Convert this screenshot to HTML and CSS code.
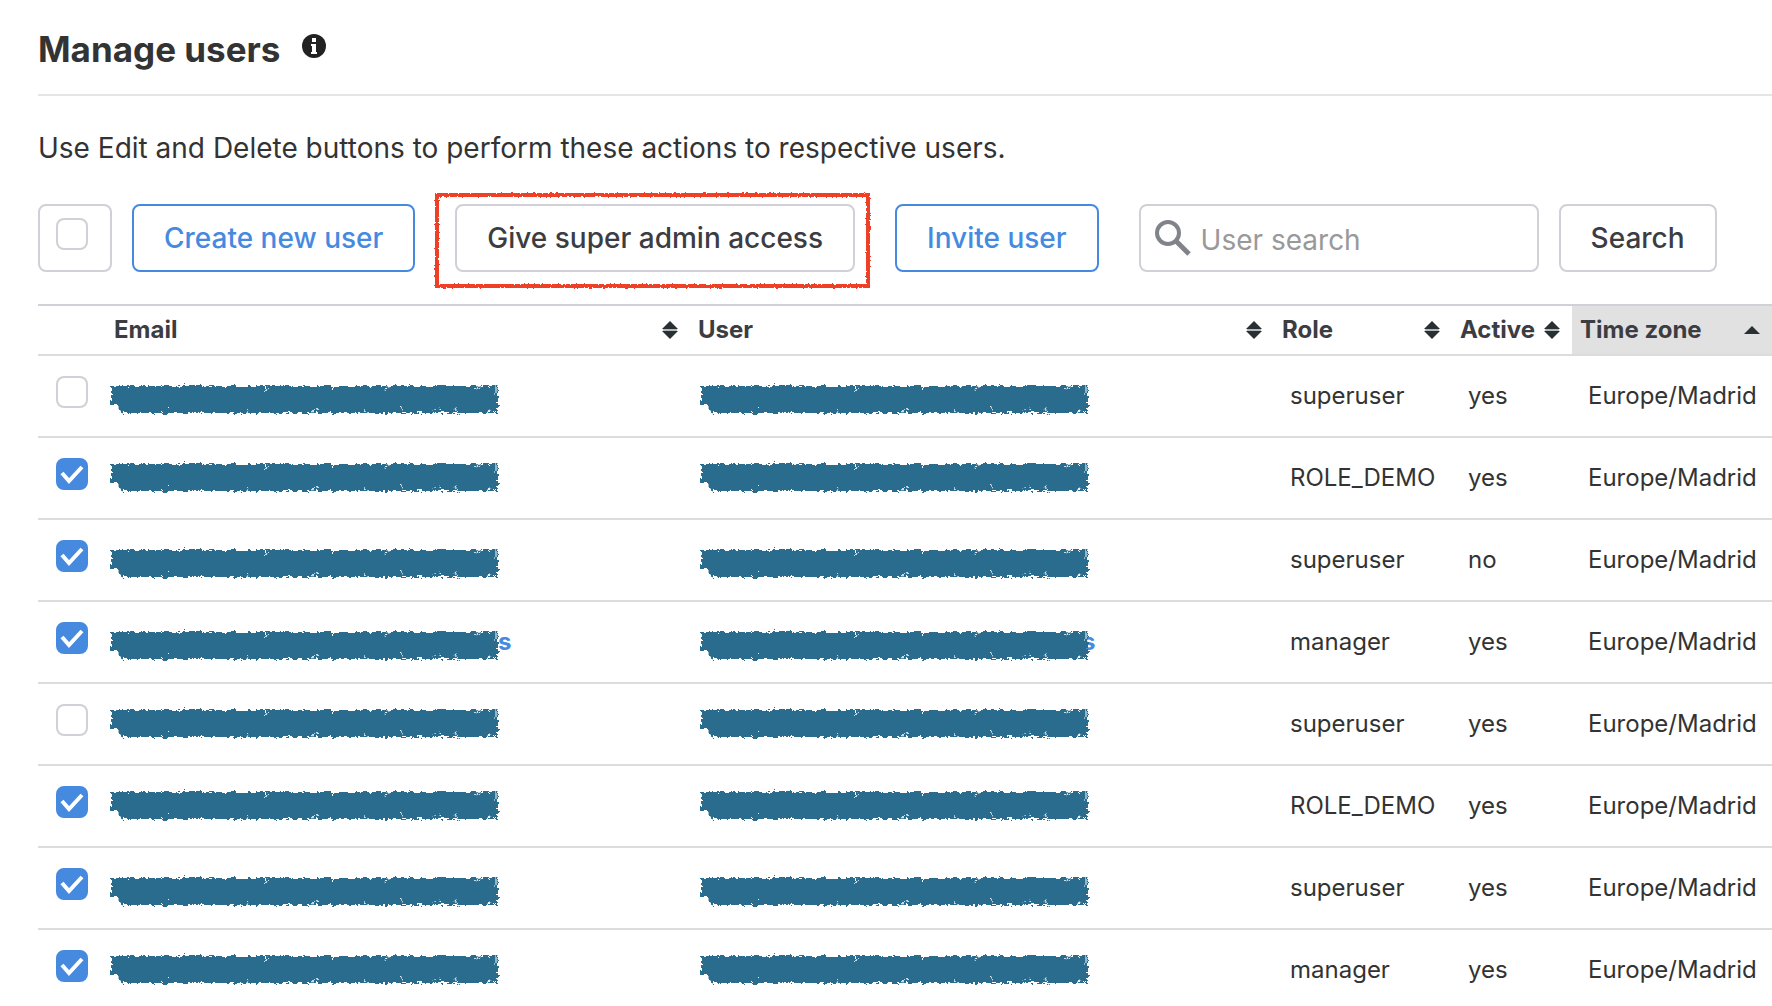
FILE: index.html
```html
<!DOCTYPE html>
<html lang="en">
<head>
    <meta charset="UTF-8">
    <meta name="viewport" content="width=device-width, initial-scale=1.0">
    <title>Manage users</title>
    <link rel="stylesheet" href="styles.css">
</head>
<body>

    <!-- Shared shapes -->
    <svg class="defs" width="0" height="0" aria-hidden="true">
        <defs>
            <filter id="rough" x="-5%" y="-20%" width="110%" height="140%">
                <feTurbulence type="fractalNoise" baseFrequency="0.2 0.35" numOctaves="3" seed="4" result="noise"/>
                <feDisplacementMap in="SourceGraphic" in2="noise" scale="7" xChannelSelector="R" yChannelSelector="G"/>
            </filter>
            <filter id="rough-line" filterUnits="userSpaceOnUse" x="-4" y="-4" width="450" height="110">
                <feTurbulence type="fractalNoise" baseFrequency="0.5" numOctaves="2" seed="8" result="noise"/>
                <feDisplacementMap in="SourceGraphic" in2="noise" scale="3" xChannelSelector="R" yChannelSelector="G"/>
            </filter>
            <symbol id="scribble" viewBox="0 0 392 34">
                <g filter="url(#rough)">
                    <path fill="#2b6c8d" d="M3 4H390V31H14L9 23H3Z"/>
                    <path fill="none" stroke="#fff" stroke-width="1" d="M155 9l6-3M223 8l5-5M277 7l7-4M313 3l4-3M366 7l8-4M388 4v8M58 28l3-3M139 31l2-5M204 29l6-3M256 28l5 3M291 25l5 4M325 29l7-3M347 26l3 5M378 30l8-2"/>
                </g>
            </symbol>
            <symbol id="sort" viewBox="0 0 16 20">
                <path fill="#293033" d="M8 1l8 8H0zM8 19l-8-8h16z"/>
                <path fill="#b5b8ba" d="M1 9h14v2H1z"/>
            </symbol>
            <symbol id="sort-up" viewBox="0 0 16 20">
                <path fill="#293033" d="M8 6l8 8H0z"/>
            </symbol>
        </defs>
    </svg>

    <div class="page">
        <header class="page-header">
            <h1>Manage users</h1>
            <svg class="info" viewBox="0 0 24 24" role="img" aria-label="Info">
                <circle cx="12" cy="12" r="12" fill="#222"/>
                <path fill="#fff" d="M10 4h4v4h-4zM9 10h5v8h1v2H9v-2h1v-6H9z"/>
            </svg>
        </header>

        <p class="intro">Use Edit and Delete buttons to perform these actions to respective users.</p>

        <form class="toolbar">
            <label class="btn btn-check"><input type="checkbox" class="check" aria-label="Select all users"></label>
            <button type="button" class="btn btn-blue">Create new user</button>
            <div class="highlight">
                <button type="button" class="btn">Give super admin access</button>
                <svg class="highlight-frame" aria-hidden="true">
                    <g filter="url(#rough-line)">
                        <rect x="3" y="3" width="431" height="91" fill="none" stroke="#ee4027" stroke-width="4"/>
                    </g>
                </svg>
            </div>
            <button type="button" class="btn btn-blue">Invite user</button>
            <div class="search">
                <svg class="search-icon" viewBox="0 0 36 36" aria-hidden="true">
                    <circle cx="13" cy="13" r="11" fill="none" stroke="#808389" stroke-width="4"/>
                    <path d="M21 21L34 34" stroke="#808389" stroke-width="5"/>
                </svg>
                <input type="text" class="search-input" placeholder="User search" aria-label="User search">
            </div>
            <button type="button" class="btn">Search</button>
        </form>

        <table class="users">
            <colgroup>
                <col class="col-check">
                <col class="col-wide">
                <col class="col-wide">
                <col class="col-role">
                <col class="col-active">
                <col>
            </colgroup>
            <thead>
                <tr>
                    <th></th>
                    <th><button type="button" class="sort">Email <svg><use href="#sort"/></svg></button></th>
                    <th><button type="button" class="sort">User <svg><use href="#sort"/></svg></button></th>
                    <th><button type="button" class="sort">Role <svg><use href="#sort"/></svg></button></th>
                    <th><button type="button" class="sort">Active <svg><use href="#sort"/></svg></button></th>
                    <th class="sorted"><button type="button" class="sort">Time zone <svg><use href="#sort-up"/></svg></button></th>
                </tr>
            </thead>
            <tbody>
                <tr class="low">
                    <td class="cell-check"><input type="checkbox" class="check" aria-label="Select user"></td>
                    <td class="cell-name"><svg class="scribble"><use href="#scribble"/></svg></td>
                    <td class="cell-name cell-user"><svg class="scribble"><use href="#scribble"/></svg></td>
                    <td>superuser</td>
                    <td>yes</td>
                    <td>Europe/Madrid</td>
                </tr>
                <tr>
                    <td class="cell-check"><input type="checkbox" class="check" aria-label="Select user" checked></td>
                    <td class="cell-name"><svg class="scribble"><use href="#scribble"/></svg></td>
                    <td class="cell-name cell-user"><svg class="scribble"><use href="#scribble"/></svg></td>
                    <td>ROLE_DEMO</td>
                    <td>yes</td>
                    <td>Europe/Madrid</td>
                </tr>
                <tr class="low">
                    <td class="cell-check"><input type="checkbox" class="check" aria-label="Select user" checked></td>
                    <td class="cell-name"><svg class="scribble"><use href="#scribble"/></svg></td>
                    <td class="cell-name cell-user"><svg class="scribble"><use href="#scribble"/></svg></td>
                    <td>superuser</td>
                    <td>no</td>
                    <td>Europe/Madrid</td>
                </tr>
                <tr class="low">
                    <td class="cell-check"><input type="checkbox" class="check" aria-label="Select user" checked></td>
                    <td class="cell-name"><svg class="scribble"><use href="#scribble"/></svg><a href="#" class="name-end">s</a></td>
                    <td class="cell-name cell-user"><svg class="scribble"><use href="#scribble"/></svg><a href="#" class="name-end">s</a></td>
                    <td>manager</td>
                    <td>yes</td>
                    <td>Europe/Madrid</td>
                </tr>
                <tr>
                    <td class="cell-check"><input type="checkbox" class="check" aria-label="Select user"></td>
                    <td class="cell-name"><svg class="scribble"><use href="#scribble"/></svg></td>
                    <td class="cell-name cell-user"><svg class="scribble"><use href="#scribble"/></svg></td>
                    <td>superuser</td>
                    <td>yes</td>
                    <td>Europe/Madrid</td>
                </tr>
                <tr>
                    <td class="cell-check"><input type="checkbox" class="check" aria-label="Select user" checked></td>
                    <td class="cell-name"><svg class="scribble"><use href="#scribble"/></svg></td>
                    <td class="cell-name cell-user"><svg class="scribble"><use href="#scribble"/></svg></td>
                    <td>ROLE_DEMO</td>
                    <td>yes</td>
                    <td>Europe/Madrid</td>
                </tr>
                <tr class="low">
                    <td class="cell-check"><input type="checkbox" class="check" aria-label="Select user" checked></td>
                    <td class="cell-name"><svg class="scribble"><use href="#scribble"/></svg></td>
                    <td class="cell-name cell-user"><svg class="scribble"><use href="#scribble"/></svg></td>
                    <td>superuser</td>
                    <td>yes</td>
                    <td>Europe/Madrid</td>
                </tr>
                <tr>
                    <td class="cell-check"><input type="checkbox" class="check" aria-label="Select user" checked></td>
                    <td class="cell-name"><svg class="scribble"><use href="#scribble"/></svg></td>
                    <td class="cell-name cell-user"><svg class="scribble"><use href="#scribble"/></svg></td>
                    <td>manager</td>
                    <td>yes</td>
                    <td>Europe/Madrid</td>
                </tr>
            </tbody>
        </table>
    </div>

</body>
</html>
```
FILE: styles.css
```css
* {
    box-sizing: border-box;
}

html {
    overflow: hidden;
}

body {
    margin: 0;
    font-family: Inter, "Liberation Sans", sans-serif;
    font-size: 24px;
    color: #333;
    background: #fff;
}

.defs {
    position: absolute;
}

.page {
    padding-left: 38px;
}

/* Heading */
.page-header {
    display: flex;
    align-items: flex-start;
    gap: 22px;
    padding: 25px 0 21px;
    border-bottom: 2px solid #e5e5e5;
}

h1 {
    margin: 0;
    font-size: 35px;
    line-height: 48px;
    font-weight: 700;
}

.info {
    width: 24px;
    height: 24px;
    margin-top: 9px;
}

.intro {
    margin: 32px 0 36px;
    font-size: 28px;
    line-height: 40px;
}

/* Toolbar */
.toolbar {
    display: flex;
    gap: 20px;
    margin-bottom: 32px;
}

.btn {
    height: 68px;
    padding: 0 30px;
    border: 2px solid #d0d0d6;
    border-radius: 8px;
    background: #fff;
    color: #3c3d42;
    font-family: inherit;
    font-size: 28px;
    font-weight: 500;
    white-space: nowrap;
    cursor: pointer;
}

.btn-blue {
    border-color: #468ae0;
    color: #468ae0;
}

.btn-check {
    width: 74px;
    padding: 12px 16px;
}

.highlight {
    position: relative;
    padding: 0 20px;
}

.highlight-frame {
    position: absolute;
    top: -12px;
    left: -1px;
    width: 440px;
    height: 100px;
    pointer-events: none;
}

.search {
    position: relative;
    width: 400px;
    margin-left: 20px;
}

.search-icon {
    position: absolute;
    top: 16px;
    left: 16px;
    width: 36px;
    height: 36px;
}

.search-input {
    width: 100%;
    height: 68px;
    padding: 4px 16px 0 60px;
    border: 2px solid #d0d0d6;
    border-radius: 8px;
    font-family: inherit;
    font-size: 28px;
    color: #333;
}

.search-input::placeholder {
    color: #999;
}

/* Checkboxes */
.check {
    display: block;
    appearance: none;
    width: 32px;
    height: 32px;
    margin: 0;
    border: 2px solid #d0d0d6;
    border-radius: 8px;
    background: #fff;
}

.check:checked {
    border-color: #468ae0;
    background: #468ae0 url("data:image/svg+xml,%3Csvg xmlns='http://www.w3.org/2000/svg' viewBox='0 0 28 28'%3E%3Cpath d='M4 13l7 8L24 7' fill='none' stroke='white' stroke-width='4'/%3E%3C/svg%3E") center / 28px no-repeat;
}

/* Users table */
.users {
    width: 100%;
    table-layout: fixed;
    border-collapse: separate;
    border-spacing: 0;
    border-top: 2px solid #d0d0d6;
}

.col-check {
    width: 68px;
}

.col-wide {
    width: 584px;
}

.col-role {
    width: 178px;
}

.col-active {
    width: 120px;
}

th {
    height: 50px;
    padding: 0 0 2px;
    border-bottom: 2px solid #dcdcdc;
}

.sorted {
    background: #e1e1e1;
}

.sort {
    display: flex;
    justify-content: space-between;
    align-items: center;
    width: 100%;
    padding: 0 12px 0 8px;
    border: none;
    background: none;
    color: #3c3d42;
    font-family: inherit;
    font-size: 24px;
    font-weight: 700;
    white-space: nowrap;
}

.sort svg {
    width: 16px;
    height: 20px;
    margin-top: 2px;
}

td {
    height: 82px;
    padding: 0 16px 2px;
    border-bottom: 2px solid #dcdcdc;
    white-space: nowrap;
}

.cell-check {
    padding: 20px 18px 28px;
}

/* Names are covered by a brush stroke */
.cell-name {
    position: relative;
}

.scribble {
    position: absolute;
    top: 22px;
    left: 2px;
    width: 392px;
    height: 34px;
}

.low .scribble {
    top: 26px;
}

.cell-user .scribble {
    left: 8px;
}

.name-end {
    margin-left: 376px;
    color: #468ae0;
    font-weight: 700;
    text-decoration: none;
}
```
